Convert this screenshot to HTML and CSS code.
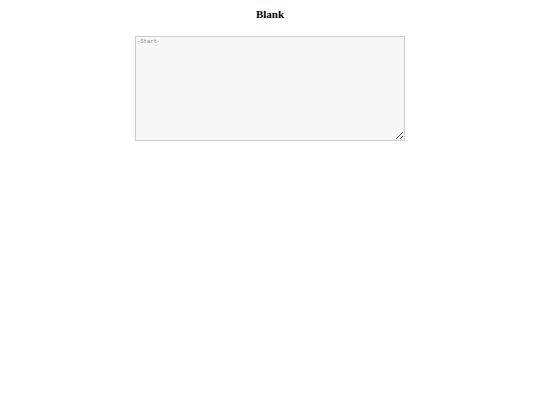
FILE: index.html
```html
<!DOCTYPE html>
<html lang="en">
<head>
  <meta charset="UTF-8">
  <title>Blank</title>
  <meta name="viewport" content="width=device-width, initial-scale=1.0">
  <link rel="stylesheet" href="styles.css">
</head>
<body>
  <div class="page">
    <h1 class="title">Blank</h1>
    <textarea class="pad" placeholder="-Start-"></textarea>
  </div>
</body>
</html>
```

FILE: styles.css
```css
body {
  margin: 0;
  font-family: 'Liberation Serif', serif;
  background: #fff;
  color: #000;
}
.page {
  display: flex;
  flex-direction: column;
  align-items: center;
  padding-top: 7px;
}
.title {
  margin: 0 0 15px 0;
  font-size: 11px;
  font-weight: 700;
  line-height: 14px;
}
.pad {
  box-sizing: border-box;
  width: 270px;
  height: 105px;
  margin: 0;
  padding: 1px 1px;
  background: #f7f7f7;
  border: 1px solid #cdcdcd;
  font-family: 'Liberation Mono', monospace;
  font-size: 5.5px;
  line-height: 8px;
  color: #333;
}
.pad::placeholder {
  color: #8a8a8a;
}
```
